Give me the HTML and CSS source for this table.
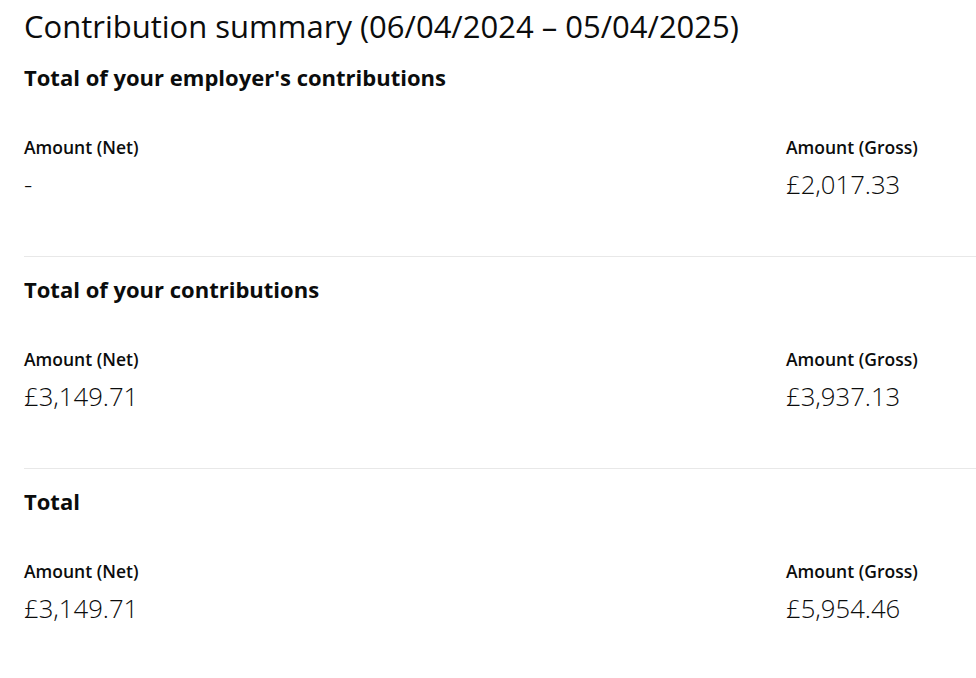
FILE: index.html
```html
<!DOCTYPE html>
<html lang="en">
<head>
<meta charset="utf-8">
<title>Contribution summary</title>
<link rel="stylesheet" href="styles.css">
</head>
<body>
<main class="page">
  <h1 class="title">Contribution summary (06/04/2024 – 05/04/2025)</h1>
  <section class="group">
    <h2 class="group-title">Total of your employer's contributions</h2>
    <div class="amounts">
      <div class="amount">
        <div class="amount-label">Amount (Net)</div>
        <div class="amount-value">-</div>
      </div>
      <div class="amount">
        <div class="amount-label">Amount (Gross)</div>
        <div class="amount-value">£2,017.33</div>
      </div>
    </div>
  </section>
  <section class="group">
    <h2 class="group-title">Total of your contributions</h2>
    <div class="amounts">
      <div class="amount">
        <div class="amount-label">Amount (Net)</div>
        <div class="amount-value">£3,149.71</div>
      </div>
      <div class="amount">
        <div class="amount-label">Amount (Gross)</div>
        <div class="amount-value">£3,937.13</div>
      </div>
    </div>
  </section>
  <section class="group group-last">
    <h2 class="group-title">Total</h2>
    <div class="amounts">
      <div class="amount">
        <div class="amount-label">Amount (Net)</div>
        <div class="amount-value">£3,149.71</div>
      </div>
      <div class="amount">
        <div class="amount-label">Amount (Gross)</div>
        <div class="amount-value">£5,954.46</div>
      </div>
    </div>
  </section>
</main>
</body>
</html>
```
FILE: styles.css
```css
html, body {
  margin: 0;
  padding: 0;
  background: #ffffff;
}
body {
  font-family: "Open Sans", "Noto Sans", sans-serif;
  color: #0b0c0c;
}
.page {
  padding: 4px 0 0 24px;
}
.title {
  margin: 0;
  font-size: 31px;
  line-height: 44px;
  font-weight: 400;
}
.group {
  padding-top: 14px;
  padding-bottom: 54px;
  border-bottom: 1px solid #e8e8e8;
}
.group + .group {
  padding-top: 17px;
}
.group-last {
  border-bottom: none;
}
.group-title {
  margin: 0;
  font-size: 22px;
  line-height: 30px;
  font-weight: 700;
}
.amounts {
  display: grid;
  grid-template-columns: 762px 1fr;
  margin-top: 44px;
}
.amount-label {
  font-size: 17.5px;
  line-height: 22px;
  font-weight: 600;
}
.amount-value {
  margin-top: 10px;
  font-size: 25.7px;
  line-height: 34px;
  font-weight: 300;
}
```
